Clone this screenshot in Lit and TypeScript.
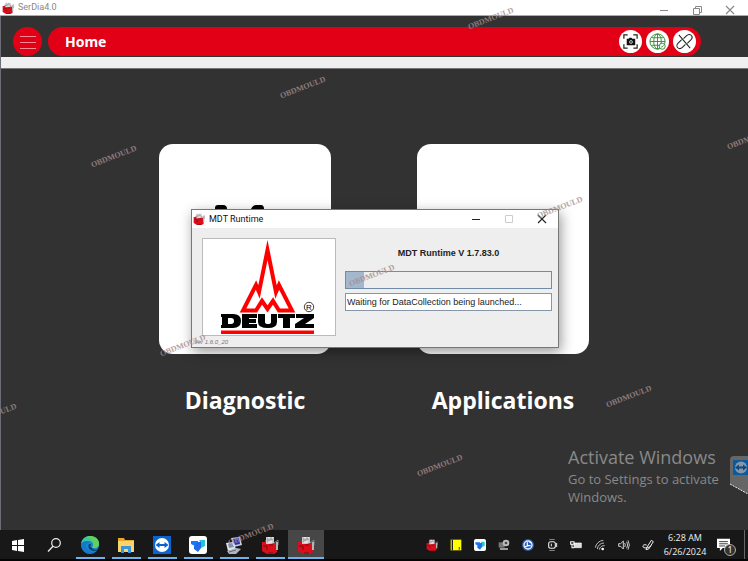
import { LitElement, html, css, svg } from "lit";
import { customElement, property } from "lit/decorators.js";
import { styleMap } from "lit/directives/style-map.js";

const engine = svg`
  <path d="M1 6h3V4h9v3h3v9l-3 2H6l-5-3z" fill="#d9101c"/>
  <path d="M5 1h8v6l-3 1H5z" fill="#c9c9c9"/>
  <path d="M6 3h6M6 5h3M13 7l4-3v5" stroke="#888" fill="none"/>
  <path d="M15 6h2v8h-2z" fill="#b5b5b5"/>
  <path d="M2 10h4v4M7 17h5M8 9h4" stroke="#7d0810" fill="none"/>
  <path d="M7 2h2M11 2h1M7 6h4" stroke="#fff"/>`;

const icons: Record<string, unknown> = {
  engine,
  start: svg`<path d="M3 5l5-1v5H3zM9 4l6-1v6H9zM3 10h5v5l-5-1zM9 10h6v6l-6-1z" fill="#fff"/>`,
  search: svg`<circle cx="11" cy="7" r="4.3" fill="none" stroke="#eee" stroke-width="1.2"/><path d="M8 10.2L3 15.5" stroke="#eee" stroke-width="1.3"/>`,
  edge: svg`<circle cx="9" cy="9" r="9" fill="#1686cf"/>
    <path d="M0 8C1 2 5 0 9 0c6 0 9 4 9 8 0 3-3 4.500-5 4-2 0-2-1-1-2 1-3-2-5-5-5C4 5 1 6 0 8z" fill="#3fc6a0"/>
    <path d="M9 0c6 0 9 4 9 8 0 3-3 4.500-5 4-2 0-2-1-1-2C13 6 12 3 5 1z" fill="#63d05b"/>
    <path d="M0 8c2-3 6-4 9-2-4 0-5 4-3 7 2 3 6 4 10 1-2 3-5 4-8 4-5-1-8-5-8-10z" fill="#1479c9"/>
    <path d="M8 8c-2 3 1 7 5 7 2 0 3-1 4-2-2 1-5 1-6-1-2-1-2-2-1-4z" fill="#123c68"/>`,
  folder: svg`<path d="M1 2h6l1 2h9v12H1z" fill="#e8a82e"/><path d="M1 5h16v11H1z" fill="#fbd469"/><path d="M4 17v-7h10v7h-3v-4H7v4z" fill="#3b95dd"/>`,
  viewer: svg`<path d="M0 0h18v18H0z" fill="#0b63cf"/><circle cx="9" cy="9" r="7" fill="#fff"/><path d="M2.500 9l4-3v2h5V6l4 3-4 3v-2h-5v2z" fill="#0b63cf"/>`,
  todesk: svg`<rect width="18" height="18" rx="3" fill="#fff"/><path d="M2 5h7v3L6 10 2 8z" fill="#1677ff"/><path d="M10 4h6v6l-4 2V7z" fill="#20c5d8"/><path d="M5 10l4-4h3v6l-3 4-4-3z" fill="#1f6bea"/>`,
  network: svg`<path d="M6 2l9-1 2 8-8 2z" fill="#c9ced8"/><path d="M8 3l6-1 1 6-5 1z" fill="#2238b5"/><path d="M1 7l7-1 3 7-8 2z" fill="#e2e5ea"/><path d="M3 8l4-1 2 4-5 1z" fill="#7d91b5"/><path d="M2 15l9-3 5 1-5 5H4z" fill="#aeb6c3"/><path d="M4 16l7-2" stroke="#5b6475"/>`,
  note: svg`<path d="M1 1h16v16H1z" fill="#ff0"/><path d="M3.500 1v16" stroke="#222" stroke-width="2"/><path d="M14 12v4" stroke="#776d00" stroke-width="2"/>`,
  webcam: svg`<path d="M1 5h9v8H1z" fill="#777"/><circle cx="12" cy="6" r="5" fill="#bbb"/><circle cx="12" cy="6" r="2" fill="#444"/><path d="M3 15h12" stroke="#ddd" stroke-width="2"/>`,
  sync: svg`<circle cx="9" cy="9" r="9" fill="#2c5db4"/><circle cx="9" cy="9" r="6" fill="none" stroke="#e8f0ff" stroke-width="2"/><path d="M8 5v5h5M4 12l5-2M11 4l3 2" stroke="#fff" stroke-width="1.800" fill="none"/>`,
  camera: svg`<rect x="4" y="4" width="10" height="10" rx="3" fill="none" stroke="#eee" stroke-width="1.600"/><path d="M8 7v4M5 0h8M5 18h8M16 6v6" fill="none" stroke="#eee" stroke-width="1.500"/>`,
  battery: svg`<path d="M6 6h11v7H6z" fill="#ddd" stroke="#fff"/><path d="M1 4h5v4H1zM3 8v5h3" fill="none" stroke="#fff" stroke-width="1.600"/>`,
  wifi: svg`<path d="M2 13A13 13 0 0 1 14 2M5 15A10 10 0 0 1 15 6M8 16a7 7 0 0 1 8-6" fill="none" stroke="#bbb" stroke-width="1.500"/><circle cx="13" cy="15" r="2" fill="#fff"/>`,
  sound: svg`<path d="M1 7h3l4-4v12l-4-4H1z" fill="none" stroke="#ddd" stroke-width="1.400"/><path d="M10 6q2 3 0 6M13 4q3 5 0 10M15 2q4 7 0 14" fill="none" stroke="#ddd" stroke-width="1.300"/>`,
  pen: svg`<path d="M7 13L14 2l3 2-7 11-4 1zM7 9C1 7 0 12 3 13s8 0 11-3" fill="none" stroke="#eee" stroke-width="1.500"/>`,
  message: svg`<path d="M0 1h18v13H8l-4 4v-4H0z" fill="#fff"/><path d="M3 5h12M3 8h12M3 11h8" stroke="#222" stroke-width="1.200"/>`,
  menu: svg`<path d="M1 3.500h16M1 9.500h16M1 15.500h16" stroke="#fa8a92"/>`,
  shot: svg`<path d="M2 6V2h4M12 2h4v4M16 12v4h-4M6 16H2v-4" fill="none" stroke="#222" stroke-width="1.300"/><path d="M5 6h2l1-1h2l1 1h3v7H5z" fill="#111"/><circle cx="9.500" cy="9.500" r="1.500" fill="#111" stroke="#fff" stroke-width=".8"/>`,
  globe: svg`<g fill="none" stroke="#378b38"><circle cx="9" cy="9" r="8"/><ellipse cx="9" cy="9" rx="4" ry="8"/><path d="M9 1v16M1 9h16M2.500 5h13M2.500 13h13"/></g><circle cx="14" cy="14" r="3.200" fill="#fff" stroke="#378b38"/><path d="M12.500 14l1 1 2-2" fill="none" stroke="#378b38"/>`,
  link: svg`<g fill="none" stroke="#222" stroke-width="1.100"><path d="M8 6l3-3c4-4 8 1 5 4l-4 4M10 12l-3 3c-4 4-8-1-5-4l4-4"/><path d="M3 2l12 14"/></g>`,
  min: svg`<path d="M5 9.500h8" stroke="currentColor"/>`,
  max: svg`<path d="M5.500 5.500h7v7h-7z" fill="none" stroke="currentColor"/>`,
  restore: svg`<path d="M5.500 7.500h6v6h-6zM7.500 7V5.500h6v6H12" fill="none" stroke="currentColor"/>`,
  close: svg`<path d="M5 5l8 8M13 5l-8 8" stroke="currentColor" stroke-width="1.100"/>`,
};

@customElement("ui-icon")
class UiIcon extends LitElement {
  @property() name = "";
  static styles = css`
    :host { display: inline-flex; width: 18px; height: 18px; flex: none; }
    .art { width: 100%; height: 100%; display: block; }
  `;
  render() {
    return html`<svg class="art" viewBox="0 0 18 18" aria-hidden="true">${icons[this.name]}</svg>`;
  }
}

const marks = [
  [491, 19], [303, 88], [114, 157], [750, 139], [560, 208], [372, 276],
  [183, 346], [-6, 415], [629, 397], [440, 466], [251, 535],
];

const pinned = [
  ["start", "Start", ""], ["search", "Search", ""], ["edge", "Microsoft Edge", "open"],
  ["folder", "File Explorer", "open"], ["viewer", "TeamViewer", "open"], ["todesk", "ToDesk", "open"],
  ["network", "Network", "open"], ["engine", "SerDia", "open"], ["engine", "MDT Runtime", "open active"],
];

const tray = ["engine", "note", "todesk", "webcam", "sync", "camera", "battery", "wifi", "sound", "pen"];

@customElement("runtime-dialog")
class RuntimeDialog extends LitElement {
  static styles = css`
    :host { display: block; box-sizing: border-box; background: #eee; border: 1px solid #777; box-shadow: 2px 4px 12px #0006; color: #222; }
    .bar { display: flex; align-items: center; height: 18px; background: #fff; padding: 0 0 0 1px; font: 9px/18px Roboto, sans-serif; }
    .bar ui-icon { width: 12px; height: 12px; }
    .title { flex: 1; margin-left: 4px; color: #111; }
    .ctl { border: 0; background: none; padding: 0; width: 33px; height: 18px; display: grid; place-items: center; color: #222; }
    .bar .ctl ui-icon { width: 18px; height: 18px; }
    .ctl:disabled { color: #ccc; }
    .body { display: flex; gap: 9px; padding: 10px 6px 0 10px; }
    .logo { box-sizing: border-box; flex: none; width: 134px; height: 98px; border: 1px solid #bbb; background: #fff; }
    .brand { display: block; width: 100%; height: 100%; }
    .info { flex: 1; display: flex; flex-direction: column; font: 9px/16px "Liberation Sans", sans-serif; }
    .ver { font-weight: bold; text-align: center; margin: 7px 0 10px; }
    progress { appearance: none; display: block; box-sizing: border-box; width: 100%; height: 18px; border: 1px solid #6f8ca8; background: #eee; }
    progress::-webkit-progress-bar { background: #eee; }
    progress::-webkit-progress-value { background: #a3b8cc; }
    .status { box-sizing: border-box; width: 100%; height: 18px; margin-top: 4px; border: 1px solid #8496a8; padding: 0 1px; font: 9px "Liberation Sans", sans-serif; color: #222; background: #fff; }
    .foot { margin: 1px 0 0 2px; font: italic 6px/10px "Liberation Sans", sans-serif; color: #777; }
  `;
  render() {
    return html`
      <div class="bar">
        <ui-icon name="engine"></ui-icon><span class="title">MDT Runtime</span>
        <button class="ctl" aria-label="Minimize"><ui-icon name="min"></ui-icon></button>
        <button class="ctl" aria-label="Maximize" disabled><ui-icon name="max"></ui-icon></button>
        <button class="ctl" aria-label="Close"><ui-icon name="close"></ui-icon></button>
      </div>
      <div class="body">
        <div class="logo">
          <svg class="brand" viewBox="0 0 132 96" role="img" aria-label="Deutz">
            <path d="M64.500 11L56 53L53 46L40 71.500H53L59 62L64.500 70L70 62L76 71.500H89L76 46L73 53Z" fill="none" stroke="#f00" stroke-width="4" stroke-miterlimit="8"/>
            <g fill="#000" fill-rule="evenodd">
              <path d="M18 75h12q8 0 8 7t-8 7H18v-3h1V78h-1zM25 79v6h3q3 0 3-3t-3-3z"/>
              <path d="M39 75h15v4H46v1h7v4h-7v1h8v4H39z"/>
              <path d="M55 75h7v8q0 2 3 2t3-2v-8h6v8q0 6-9 6-10 0-10-6z"/>
              <path d="M75 75h17v4h-5v10h-7V79h-5z"/>
              <path d="M93 75h18v4l-9 6h9v4H92v-4l9-6h-8z"/>
            </g>
            <path d="M18 91.500h93v3.500H18z" fill="#f00"/>
            <circle cx="106" cy="68" r="4.700" fill="none" stroke="#111" stroke-width=".8"/>
            <text x="106" y="71" font-size="8" text-anchor="middle" font-family="Liberation Sans, sans-serif">R</text>
          </svg>
        </div>
        <div class="info">
          <div class="ver">MDT Runtime V 1.7.83.0</div>
          <progress max="100" value="9" aria-label="Launch progress"></progress>
          <input class="status" aria-label="Status" readonly .value=${"Waiting for DataCollection being launched..."}>
        </div>
      </div>
      <p class="foot">Ver 1.6.0_20</p>`;
  }
}

@customElement("app-root")
class AppRoot extends LitElement {
  static styles = css`
    :host { display: flex; flex-direction: column; position: relative; overflow: hidden; box-sizing: border-box; min-height: 100vh; background: #323232; font-family: "Noto Sans", sans-serif; color: #fff; }
    button { font: inherit; border: 0; background: none; padding: 0; color: inherit; }
    .title { display: flex; align-items: center; height: 15px; background: #fff; color: #888; font: 9px/15px Roboto, sans-serif; padding: 0 2px; border-bottom: 1px solid #a9adad; }
    .title ui-icon { width: 12px; height: 12px; }
    .name { flex: 1; margin-left: 4px; }
    .ctl { width: 33px; height: 14px; display: grid; place-items: center; }
    .title .ctl ui-icon { width: 18px; height: 18px; }
    .app { flex: 1; display: flex; flex-direction: column; border-left: 1px solid #6b6e76; }
    .head { display: flex; gap: 6px; padding: 11px 47px 1px 12px; }
    .menu { width: 29px; height: 29px; border-radius: 50%; background: #e10016; display: grid; place-items: center; }
    .crumb { flex: 1; height: 29px; box-sizing: border-box; border-radius: 15px; background: #e10016; display: flex; align-items: center; gap: 4px; padding: 0 5px 0 17px; }
    h1 { flex: 1; margin: 0; font: bold 14px/32px "Noto Sans", sans-serif; }
    .tool { width: 23px; height: 23px; border-radius: 50%; background: #fff; display: grid; place-items: center; }
    .tool ui-icon { width: 17px; height: 17px; }
    .band { height: 11px; background: #f0eff0; border-bottom: 1px solid #777; }
    .cards { display: flex; justify-content: center; gap: 86px; padding: 75px 1px 0 0; }
    .tile { width: 172px; display: flex; flex-direction: column; align-items: center; gap: 29px; font: bold 23px/34px "Open Sans", sans-serif; white-space: nowrap; }
    .card { width: 172px; height: 210px; border-radius: 14px; background: #fff; display: flex; justify-content: center; padding-top: 60px; box-sizing: border-box; }
    .glyph { width: 60px; height: 60px; }
    .notice { align-self: flex-end; margin: auto 33px 24px 0; color: #898989; font: 13px/18px "Open Sans", sans-serif; width: 147px; white-space: nowrap; }
    .notice h2 { margin: 0; font: 18px/26px "Open Sans", sans-serif; }
    .notice p { margin: 0; }
    .tasks { display: flex; align-items: stretch; height: 29px; background: #181818; border-bottom: 2px solid #050505; }
    .task { width: 36px; display: flex; flex-direction: column; align-items: center; justify-content: center; position: relative; }
    .task.open::after { content: ""; position: absolute; left: 4px; right: 3px; bottom: 0; height: 2px; background: #6db4ee; }
    .task.active { background: #474747; }
    .task.active::after { left: 0; right: 0; }
    .tray { margin-left: auto; display: flex; align-items: center; }
    .item { width: 24px; height: 29px; display: grid; place-items: center; }
    .item ui-icon { width: 12px; height: 12px; }
    .clock { width: 50px; text-align: center; font: 9px/14px "Open Sans", sans-serif; color: #eee; }
    .bell { width: 34px; height: 29px; display: flex; align-items: center; justify-content: center; position: relative; }
    .bell ui-icon { width: 13px; height: 13px; margin-right: 8px; }
    .count { position: absolute; right: 8px; bottom: 3px; width: 10px; height: 10px; border: 1px solid #aaa; border-radius: 50%; background: #333; font: 8px/10px "Noto Sans", sans-serif; }
    .peek { width: 3px; height: 29px; border-left: 1px solid #666; }
    runtime-dialog { position: absolute; top: 209px; left: calc(50% - 183px); width: 368px; height: 139px; }
    .dock { position: absolute; right: 0; top: 456px; width: 18px; height: 38px; }
    .dock svg { display: block; width: 18px; height: 38px; }
    .mark { position: absolute; transform: translate(-50%, -50%) rotate(-21deg); font: bold 8px/10px "Liberation Serif", serif; color: #a58c8c; opacity: .8; pointer-events: none; white-space: nowrap; }
  `;
  render() {
    return html`
      <div class="title">
        <ui-icon name="engine"></ui-icon><span class="name">SerDia4.0</span>
        <button class="ctl" aria-label="Minimize"><ui-icon name="min"></ui-icon></button>
        <button class="ctl" aria-label="Restore"><ui-icon name="restore"></ui-icon></button>
        <button class="ctl" aria-label="Close"><ui-icon name="close"></ui-icon></button>
      </div>
      <main class="app">
        <header class="head">
          <button class="menu" aria-label="Menu"><ui-icon name="menu"></ui-icon></button>
          <div class="crumb">
            <h1>Home</h1>
            <button class="tool" aria-label="Screenshot"><ui-icon name="shot"></ui-icon></button>
            <button class="tool" aria-label="Online"><ui-icon name="globe"></ui-icon></button>
            <button class="tool" aria-label="Connection"><ui-icon name="link"></ui-icon></button>
          </div>
        </header>
        <div class="band"></div>
        <div class="cards">
          <button class="tile">
            <span class="card"><svg class="glyph" viewBox="0 0 60 60" aria-hidden="true"><path d="M0 4q0-3 3-3h5q4 0 4 4v24H0zM36 5q2-4 5-4h5q3 0 3 4v24H36z"/></svg></span>
            <span>Diagnostic</span>
          </button>
          <button class="tile"><span class="card"></span><span>Applications</span></button>
        </div>
        <aside class="notice">
          <h2>Activate Windows</h2>
          <p>Go to Settings to activate<br>Windows.</p>
        </aside>
      </main>
      <nav class="tasks" aria-label="Taskbar">
        ${pinned.map(([icon, label, state]) => html`<button class="task ${state}" aria-label=${label}><ui-icon name=${icon}></ui-icon></button>`)}
        <div class="tray">
          ${tray.map((icon) => html`<button class="item" aria-label=${icon}><ui-icon name=${icon}></ui-icon></button>`)}
          <div class="clock">6:28 AM<br>6/26/2024</div>
          <button class="bell" aria-label="Notifications"><ui-icon name="message"></ui-icon><span class="count">1</span></button>
          <span class="peek"></span>
        </div>
      </nav>
      <runtime-dialog role="dialog" aria-label="MDT Runtime"></runtime-dialog>
      <button class="dock" aria-label="TeamViewer panel">
        <svg viewBox="0 0 18 38" aria-hidden="true"><path d="M18 0H4Q0 0 0 4v24l18 10z" fill="#666"/><path d="M0 28l18 10" stroke="#eee" stroke-dasharray="2 1"/><path d="M3 4h15v15H3z" fill="#0a5aa0"/><circle cx="11" cy="11.500" r="6" fill="#8796a2"/><path d="M5 11.500l4-3v2h4v-2l4 3-4 3v-2H9v2z" fill="#0a4a86"/></svg>
      </button>
      ${marks.map(([x, y]) => html`<span class="mark" aria-hidden="true" style=${styleMap({ left: `${x}px`, top: `${y}px` })}>OBDMOULD</span>`)}`;
  }
}
